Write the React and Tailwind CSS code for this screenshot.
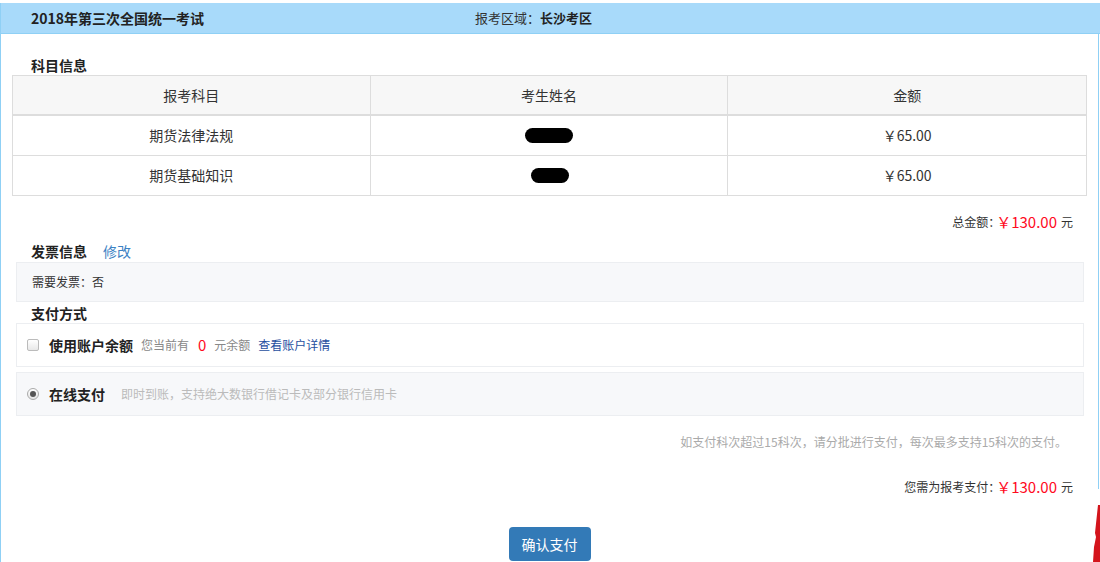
/** Exam fee payment confirmation page. */

const subjects = [
  { name: "期货法律法规", blob: "w-[48px] h-[15px]", amount: "￥65.00" },
  { name: "期货基础知识", blob: "w-[38px] h-[15px] ml-[2px]", amount: "￥65.00" },
];

function Amount({ label, value }) {
  return (
    <div className="flex h-[20px] items-center justify-end">
      <span className="text-[12px] text-[#333]">{label}</span>
      <span className="-ml-[4px] text-[15px] text-[#ff0a1e]">{value}</span>
      <span className="ml-[4px] text-[12px] text-[#333]">元</span>
    </div>
  );
}

export default function App() {
  return (
    <div
      className="relative h-[562px] w-[1100px] overflow-hidden bg-white pt-[3px] text-[#333]"
      style={{ fontFamily: '"Noto Sans CJK SC", "Noto Sans", sans-serif' }}
    >
      {/* header bar */}
      <div className="flex h-[31px] w-[1100px] items-center border-b border-l border-[#8fd0f5] bg-[#a8dafa] pl-[30px]">
        <span className="w-[444px] text-[14px] font-bold text-[#222]">2018年第三次全国统一考试</span>
        <span className="text-[13px] text-[#333]">
          报考区域：<b className="text-[#222]">长沙考区</b>
        </span>
      </div>

      <div className="h-[600px] w-[1099px] border-l border-r border-[#8fd0f5]">
        {/* subjects */}
        <div className="pl-[30px] pt-[21px] text-[14px] font-bold leading-[20px] text-[#222]">科目信息</div>
        <div className="ml-[11px] w-[1075px] border-l border-r border-t border-[#ddd] text-[14px]">
          <div className="grid h-[40px] grid-cols-3 border-b-2 border-[#ddd] bg-[#f7f7f7]">
            <div className="flex items-center justify-center border-r border-[#ddd]">报考科目</div>
            <div className="flex items-center justify-center border-r border-[#ddd]">考生姓名</div>
            <div className="flex items-center justify-center">金额</div>
          </div>
          {subjects.map((s) => (
            <div key={s.name} className="grid h-[40px] grid-cols-3 border-b border-[#ddd]">
              <div className="flex items-center justify-center border-r border-[#ddd]">{s.name}</div>
              <div className="flex items-center justify-center border-r border-[#ddd]">
                <div className={`rounded-[8px] bg-black ${s.blob}`} />
              </div>
              <div className="flex items-center justify-center">{s.amount}</div>
            </div>
          ))}
        </div>

        <div className="mt-[16px] pr-[25px]">
          <Amount label="总金额：" value="￥130.00" />
        </div>

        {/* invoice */}
        <div className="mt-[9px] flex h-[20px] items-center pl-[30px]">
          <span className="text-[14px] font-bold text-[#222]">发票信息</span>
          <span className="ml-[16px] text-[14px] text-[#3b82c4]">修改</span>
        </div>
        <div className="ml-[15px] mt-[1px] flex h-[40px] w-[1068px] items-center border border-[#eceef1] bg-[#f7f8fa] pl-[15px] text-[12px]">
          需要发票：否
        </div>

        {/* payment */}
        <div className="mt-[1px] flex h-[20px] items-center pl-[30px] text-[14px] font-bold text-[#222]">支付方式</div>
        <div className="ml-[15px] flex h-[44px] w-[1068px] items-center border border-[#eceef1] bg-white pl-[10px]">
          <span className="h-[12px] w-[12px] rounded-[2px] border border-[#bbb] bg-gradient-to-b from-white to-[#e8e8e8]" />
          <span className="ml-[10px] text-[14px] font-bold text-[#222]">使用账户余额</span>
          <span className="ml-[8px] text-[12px] text-[#888]">您当前有</span>
          <span className="ml-[9px] text-[15px] text-[#ff0a1e]">0</span>
          <span className="ml-[8px] text-[12px] text-[#888]">元余额</span>
          <span className="ml-[8px] text-[12px] text-[#1f4f9f]">查看账户详情</span>
        </div>
        <div className="ml-[15px] mt-[5px] flex h-[44px] w-[1068px] items-center border border-[#eceef1] bg-[#f7f8fa] pl-[10px]">
          <span className="flex h-[12px] w-[12px] items-center justify-center rounded-full border border-[#aaa] bg-gradient-to-b from-white to-[#e4e4e4]">
            <span className="h-[6px] w-[6px] rounded-full bg-[#555]" />
          </span>
          <span className="ml-[10px] text-[14px] font-bold text-[#222]">在线支付</span>
          <span className="ml-[16px] text-[12px] text-[#bbb]">即时到账，支持绝大数银行借记卡及部分银行信用卡</span>
        </div>

        <div className="mt-[16px] flex h-[20px] items-center justify-end pr-[31px] text-[12px] text-[#aaa]">
          如支付科次超过15科次，请分批进行支付，每次最多支持15科次的支付。
        </div>

        <div className="mt-[25px] pr-[25px]">
          <Amount label="您需为报考支付：" value="￥130.00" />
        </div>

        <div className="mt-[30px] flex justify-center">
          <button
            type="button"
            className="flex h-[34px] w-[82px] items-center justify-center rounded-[4px] bg-[#337ab7] text-[14px] text-white"
          >
            确认支付
          </button>
        </div>
      </div>

      {/* overlapping corner at bottom right */}
      <div className="absolute right-0 top-[489px] h-[73px] w-[10px] bg-white">
        <svg width="10" height="73" viewBox="0 0 10 73">
          <polygon points="8,16 10,16 10,73 3,73 4,58 6,48 5,44" fill="#d4141c" />
        </svg>
      </div>
    </div>
  );
}
